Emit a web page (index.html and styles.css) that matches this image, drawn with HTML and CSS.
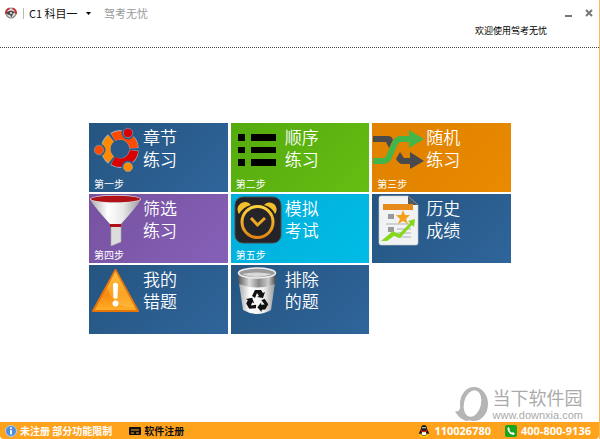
FILE: index.html
```html
<!DOCTYPE html>
<html lang="zh-CN">
<head>
    <meta charset="UTF-8">
    <meta name="viewport" content="width=device-width, initial-scale=1.0">
    <title>驾考无忧</title>
    <link rel="stylesheet" href="styles.css">
</head>
<body>
    <!-- Title bar -->
    <header class="header">
        <div class="titlebar">
            <svg class="logo" viewBox="0 0 12 12" aria-hidden="true">
                <circle cx="6" cy="6" r="5" fill="#ddd" stroke="#888" stroke-width="1.2"/>
                <path d="M1 7A5 5 0 0 1 4.500 1.300M7.500 1.300A5 5 0 0 1 11 7" fill="none" stroke="#d3262b" stroke-width="1.8"/>
                <path d="M1.500 5L6 3.600L10.500 5L8 6.500L6.500 10.500L5 8L2.500 7.500Z" fill="#444"/>
                <circle cx="6" cy="6" r="1.200" fill="#ccc"/>
            </svg>
            <span class="divider"></span>
            <select class="subject" aria-label="科目">
                <option>C1 科目一</option>
                <option>C1 科目四</option>
            </select>
            <span class="app-name">驾考无忧</span>
            <button class="window-button" aria-label="最小化">
                <svg viewBox="0 0 10 10"><path d="M1 8H8" stroke="#777" stroke-width="2"/></svg>
            </button>
            <button class="window-button" aria-label="关闭">
                <svg viewBox="0 0 10 10"><path d="M2 2L8 8M8 2L2 8" stroke="#777" stroke-width="2"/></svg>
            </button>
        </div>
        <p class="welcome">欢迎使用驾考无忧</p>
    </header>

    <!-- Menu tiles -->
    <main class="content">
        <div class="tiles">
            <button class="tile blue">
                <svg class="tile-icon" viewBox="0 0 54 52" aria-hidden="true">
                    <g fill="none" stroke="#9db2c5" stroke-width="9.500">
                        <path d="M23.800 14A14 14 0 0 1 45 25.300"/>
                        <path d="M45 27.300A14 14 0 0 1 23.800 38"/>
                        <path d="M22 37A14 14 0 0 1 22 15"/>
                    </g>
                    <g fill="none" stroke-width="8.500">
                        <path d="M24.200 14.200A14 14 0 0 1 45 25" stroke="#ff4b00"/>
                        <path d="M45 27.600A14 14 0 0 1 24.200 37.800" stroke="#d90000"/>
                        <path d="M22 36.600A14 14 0 0 1 22 15.400" stroke="#ff8c00"/>
                    </g>
                    <g stroke="#2a5a87" stroke-width="2">
                        <circle cx="39" cy="10" r="5.500" fill="#d90000"/>
                        <circle cx="10" cy="27" r="5.500" fill="#ff4b00"/>
                        <circle cx="39" cy="44" r="5.500" fill="#ff8c00"/>
                    </g>
                    <g fill="none" stroke="#9db2c5" stroke-width="0.500">
                        <circle cx="39" cy="10" r="4.700"/>
                        <circle cx="10" cy="27" r="4.700"/>
                        <circle cx="39" cy="44" r="4.700"/>
                    </g>
                </svg>
                <span class="tile-title">章节<br>练习</span>
                <span class="tile-step">第一步</span>
            </button>

            <button class="tile green">
                <svg class="tile-icon" viewBox="0 0 54 52" aria-hidden="true">
                    <path d="M7 11h7v7H7zM20 11h25v7H20zM7 24h7v6H7zM20 24h25v6H20zM7 36h7v7H7zM20 36h25v7H20z"/>
                </svg>
                <span class="tile-title">顺序<br>练习</span>
                <span class="tile-step">第二步</span>
            </button>

            <button class="tile orange">
                <svg class="tile-icon" viewBox="0 0 54 52" aria-hidden="true">
                    <path d="M1 13H16Q20 13 21 17L17 25L14 19H1ZM28 29L32 35H38V29L52 38L38 46V41H30Q27 41 24 36Z" fill="#4a4a4c"/>
                    <path d="M1 38H11Q15 38 17 34L23 20Q25 16 29 16H40" fill="none" stroke="#43b649" stroke-width="6"/>
                    <path d="M37 7L52 16L37 25Z" fill="#43b649"/>
                </svg>
                <span class="tile-title">随机<br>练习</span>
                <span class="tile-step">第三步</span>
            </button>

            <button class="tile purple">
                <svg class="tile-icon" viewBox="0 0 54 52" aria-hidden="true">
                    <defs>
                        <linearGradient id="funnel">
                            <stop offset="0" stop-color="#aaa"/>
                            <stop offset=".35" stop-color="#fff"/>
                            <stop offset=".65" stop-color="#e8e8e8"/>
                            <stop offset="1" stop-color="#999"/>
                        </linearGradient>
                    </defs>
                    <path d="M1 5Q2 9 21 30H32Q51 9 52 5Z" fill="url(#funnel)"/>
                    <ellipse cx="26.500" cy="5" rx="25.500" ry="4" fill="#ddd"/>
                    <ellipse cx="26.500" cy="5" rx="24.500" ry="3.300" fill="#b01217"/>
                    <path d="M22 32H32V48L22 52Z" fill="#dcdcdc" stroke="#aaa" stroke-width=".6"/>
                    <rect x="21" y="30" width="11" height="3" fill="#b01217"/>
                </svg>
                <span class="tile-title">筛选<br>练习</span>
                <span class="tile-step">第四步</span>
            </button>

            <button class="tile cyan">
                <svg class="tile-icon" viewBox="0 0 54 52" aria-hidden="true">
                    <defs>
                        <linearGradient id="clock" x2="0" y2="1">
                            <stop offset="0" stop-color="#ffd23c"/>
                            <stop offset="1" stop-color="#e08512"/>
                        </linearGradient>
                    </defs>
                    <rect x="4" y="3" width="46" height="46" rx="8" fill="#242428" stroke="#4a4a4e"/>
                    <path d="M8 20A7 7 0 1 1 20 11Q12 13 8 20ZM44 20A7 7 0 1 0 33 11Q41 13 44 20Z" fill="#f6bd2b"/>
                    <circle cx="26.500" cy="28" r="15.500" fill="#252529" stroke="url(#clock)" stroke-width="3"/>
                    <path d="M20 24L26.500 31L34 24" fill="none" stroke="#eda725" stroke-width="3"/>
                </svg>
                <span class="tile-title">模拟<br>考试</span>
                <span class="tile-step">第五步</span>
            </button>

            <button class="tile blue">
                <svg class="tile-icon" viewBox="0 0 54 52" aria-hidden="true">
                    <path d="M9 2H36L46 11V49Q46 51 44 51H9Q7 51 7 49V4Q7 2 9 2Z" fill="#f1f2f3" stroke="#ccc" stroke-width=".6"/>
                    <path d="M36 2L46 11H36Z" fill="#55595e"/>
                    <path d="M11 10H41V16H11Z" fill="#e68a1c"/>
                    <path d="M16 20h6v5h-6zM16 33h6v5h-6z" fill="#999"/>
                    <path d="M14 30H40M25 35H39M25 39H39M25 43H39" stroke="#c4c6c9" stroke-width="1.500"/>
                    <path d="M31 16L33 21L38 21L34 25L36 30L31 27L26 30L28 25L24 21L29 21Z" fill="#f5a11c"/>
                    <path d="M9 47L21 37L27 40L38 29L36 27L43 25L42 33L40 31L28 44L22 42L15 47Z" fill="#86d81c"/>
                </svg>
                <span class="tile-title">历史<br>成绩</span>
            </button>

            <button class="tile blue">
                <svg class="tile-icon" viewBox="0 0 54 52" aria-hidden="true">
                    <defs>
                        <linearGradient id="warning" x2="0" y2="1">
                            <stop offset="0" stop-color="#ffb52e"/>
                            <stop offset=".6" stop-color="#f88b0c"/>
                            <stop offset="1" stop-color="#ffb02a"/>
                        </linearGradient>
                    </defs>
                    <path d="M26.500 5L49 46H4Z" fill="url(#warning)" stroke="#e87509" stroke-width="2" stroke-linejoin="round"/>
                    <path d="M26.500 6L46 42Q25 45 18 22Z" fill="#ffd15c" opacity=".35"/>
                    <path d="M24.500 19Q26.500 17 28.500 19L28 33H25Z" fill="#fff" stroke="#fff"/>
                    <circle cx="26.500" cy="38.500" r="3" fill="#fff"/>
                </svg>
                <span class="tile-title">我的<br>错题</span>
            </button>

            <button class="tile blue">
                <svg class="tile-icon" viewBox="0 0 54 52" aria-hidden="true">
                    <defs>
                        <linearGradient id="bin">
                            <stop offset="0" stop-color="#aaa"/>
                            <stop offset=".3" stop-color="#fff"/>
                            <stop offset=".7" stop-color="#eee"/>
                            <stop offset="1" stop-color="#999"/>
                        </linearGradient>
                        <linearGradient id="rim">
                            <stop offset="0" stop-color="#555"/>
                            <stop offset=".3" stop-color="#ddd"/>
                            <stop offset=".55" stop-color="#888"/>
                            <stop offset=".8" stop-color="#ccc"/>
                            <stop offset="1" stop-color="#444"/>
                        </linearGradient>
                    </defs>
                    <path d="M8 18L12 45Q26 53 40 45L44 18Z" fill="url(#bin)"/>
                    <path d="M7 8L8 19Q26 26 44 19L45 8Z" fill="url(#rim)"/>
                    <ellipse cx="26" cy="8" rx="18.500" ry="5" fill="#9a9a9a" stroke="#eee" stroke-width="1.500"/>
                    <path d="M11 9Q26 15 41 9Q26 6 11 9Z" fill="#d8d8d8"/>
                    <!-- three recycling arrows -->
                    <g fill="#111">
                        <path id="arrow" d="M21 31L24 25H30L32 28L34 27L32 33L26 32L28 31L26 28L24 33Z"/>
                        <use href="#arrow" transform="rotate(120 26.500 36)"/>
                        <use href="#arrow" transform="rotate(240 26.500 36)"/>
                    </g>
                </svg>
                <span class="tile-title">排除<br>的题</span>
            </button>
        </div>

        <div class="watermark">
            <svg class="watermark-logo" viewBox="0 0 34 34" aria-hidden="true">
                <path d="M0 24Q3 31 11 34L16 33Q8 27 6 17Q5 26 0 24Z" fill="#b5b5b5"/>
                <ellipse cx="19" cy="17" rx="14" ry="17" fill="#b5b5b5"/>
                <ellipse cx="17.500" cy="16.500" rx="8.500" ry="13.500" fill="#fff" transform="rotate(14 17.500 16.500)"/>
            </svg>
            <div>
                <div class="watermark-name">当下软件园</div>
                <div class="watermark-url">www.downxia.com</div>
            </div>
        </div>
    </main>

    <!-- Status bar -->
    <footer class="statusbar">
        <svg class="status-icon" viewBox="0 0 12 12" aria-hidden="true">
            <circle cx="6" cy="6" r="5.500" fill="#4e8fdc" stroke="#b9cfe8"/>
            <path d="M6 5V9.500M6 2.300V4" stroke="#fff" stroke-width="1.800"/>
        </svg>
        <span class="status-text">未注册 部分功能限制</span>
        <button class="register">
            <svg class="status-icon" viewBox="0 0 12 12" aria-hidden="true">
                <rect y="2" width="12" height="8" rx="1" fill="#111"/>
                <path d="M2 5H10M2 8H5M7 8H10" stroke="#ffa21c"/>
            </svg>
            软件注册
        </button>
        <div class="contact">
            <svg class="status-icon" viewBox="0 0 12 12" aria-hidden="true">
                <ellipse cx="6" cy="10.800" rx="4.500" ry="1.200" fill="#f5d000"/>
                <path d="M3 4Q3 0 6 0Q9 0 9 4Q11 7 11 9L9 8.500Q8 11 6 11Q4 11 3 8.500L1 9Q1 7 3 4Z" fill="#1b1b1b"/>
                <ellipse cx="6" cy="8.500" rx="2.300" ry="2" fill="#fff"/>
                <circle cx="5" cy="2.700" r=".8" fill="#fff"/>
                <circle cx="7" cy="2.700" r=".8" fill="#fff"/>
                <path d="M3 5Q6 7 9 5V6.500Q6 8 3 6.500Z" fill="#e02020"/>
            </svg>
            <span>110026780</span>
        </div>
        <div class="contact phone">
            <svg class="status-icon" viewBox="0 0 12 12" aria-hidden="true">
                <rect width="12" height="12" rx="2" fill="#17a51c"/>
                <path d="M3.500 2L2.300 3.200Q2.500 8.500 8.500 10L10 8.700L8 7L7 7.800Q5 6.800 4.300 5L5 4.200Z" fill="#fff"/>
            </svg>
            <span>400-800-9136</span>
        </div>
    </footer>
</body>
</html>
```
FILE: styles.css
```css
* {
    box-sizing: border-box;
}

body {
    margin: 0;
    min-height: 100vh;
    display: flex;
    flex-direction: column;
    font-family: "Noto Sans CJK SC", sans-serif;
    font-size: 11px;
    color: #222;
    background-color: #fff;
    border-right: 1px solid #fdb94e;
}

button,
select {
    font-family: inherit;
    border: none;
    padding: 0;
    margin: 0;
    cursor: pointer;
}

/* Title bar */
.header {
    border-bottom: 1px dotted #444;
    padding: 4px 5px 8px;
}

.titlebar {
    display: flex;
    align-items: center;
    height: 18px;
}

.logo {
    width: 12px;
    height: 12px;
}

.divider {
    width: 1px;
    height: 11px;
    margin: 0 5px 0 6px;
    background-color: #bbb;
}

.subject {
    appearance: none;
    width: 64px;
    font-size: 11px;
    color: #111;
    background: url("data:image/svg+xml,%3Csvg xmlns='http://www.w3.org/2000/svg' width='5' height='3'%3E%3Cpath d='M0 0H5L2.5 3Z'/%3E%3C/svg%3E") no-repeat right 2px center;
}

.app-name {
    margin-left: 11px;
    margin-right: auto;
    line-height: 16px;
    color: #999;
}

.window-button {
    width: 10px;
    height: 10px;
    margin-left: 10px;
    background: none;
}

.window-button svg {
    display: block;
}

.welcome {
    margin: 0 47px 0 0;
    font-size: 9px;
    line-height: 17px;
    text-align: right;
    color: #000;
}

/* Tiles */
.content {
    flex: 1;
    position: relative;
    padding: 75px 16px 16px 17px;
}

.tiles {
    display: grid;
    grid-template-columns: repeat(3, 1fr);
    gap: 2px 3px;
    max-width: 422px;
    margin: 0 auto;
}

.tile {
    display: grid;
    grid-template-columns: 54px 1fr;
    grid-template-rows: 52px 17px;
    color: #fff;
    text-align: left;
}

.tile:hover {
    opacity: 0.9;
}

.tile-icon {
    width: 54px;
    height: 52px;
}

.tile-title {
    padding-top: 3px;
    font-size: 17px;
    font-weight: 350;
    line-height: 22px;
}

.tile-step {
    grid-column: 1 / 3;
    padding-left: 5px;
    font-size: 10px;
    line-height: 17px;
}

.blue {
    background: linear-gradient(135deg, #255580, #2f659b);
}

.green {
    background: linear-gradient(135deg, #55ab0d, #65bd13);
}

.orange {
    background: linear-gradient(135deg, #e08100, #e98a00);
}

.purple {
    background: linear-gradient(135deg, #77529f, #8560b8);
}

.cyan {
    background: linear-gradient(135deg, #00aed9, #00bce6);
}

/* Watermark */
.watermark {
    position: absolute;
    right: 16px;
    bottom: 0;
    display: flex;
    align-items: center;
    gap: 4px;
    color: #aaa;
}

.watermark-logo {
    width: 34px;
    height: 34px;
}

.watermark-name {
    font-size: 18px;
    line-height: 22px;
}

.watermark-url {
    font-family: "Liberation Sans", Arial, sans-serif;
    font-size: 11px;
    line-height: 14px;
}

/* Status bar */
.statusbar {
    display: flex;
    align-items: center;
    height: 17px;
    padding: 0 8px 0 5px;
    font-size: 10px;
    font-weight: bold;
    color: #fff;
    background-color: #ffa21c;
    border-radius: 0 0 4px 4px;
}

.status-icon {
    width: 12px;
    height: 12px;
}

.status-text {
    margin-left: 3px;
}

.register {
    display: flex;
    align-items: center;
    gap: 3px;
    margin-left: 17px;
    margin-right: auto;
    font-size: 10px;
    font-weight: bold;
    color: #111;
    background: none;
}

.contact {
    display: flex;
    align-items: center;
    gap: 4px;
    font-family: "Noto Sans", sans-serif;
    font-size: 11px;
    line-height: 12px;
}

.phone {
    margin-left: 10px;
    padding-left: 3px;
    border-left: 1px solid #d9a050;
}
```
